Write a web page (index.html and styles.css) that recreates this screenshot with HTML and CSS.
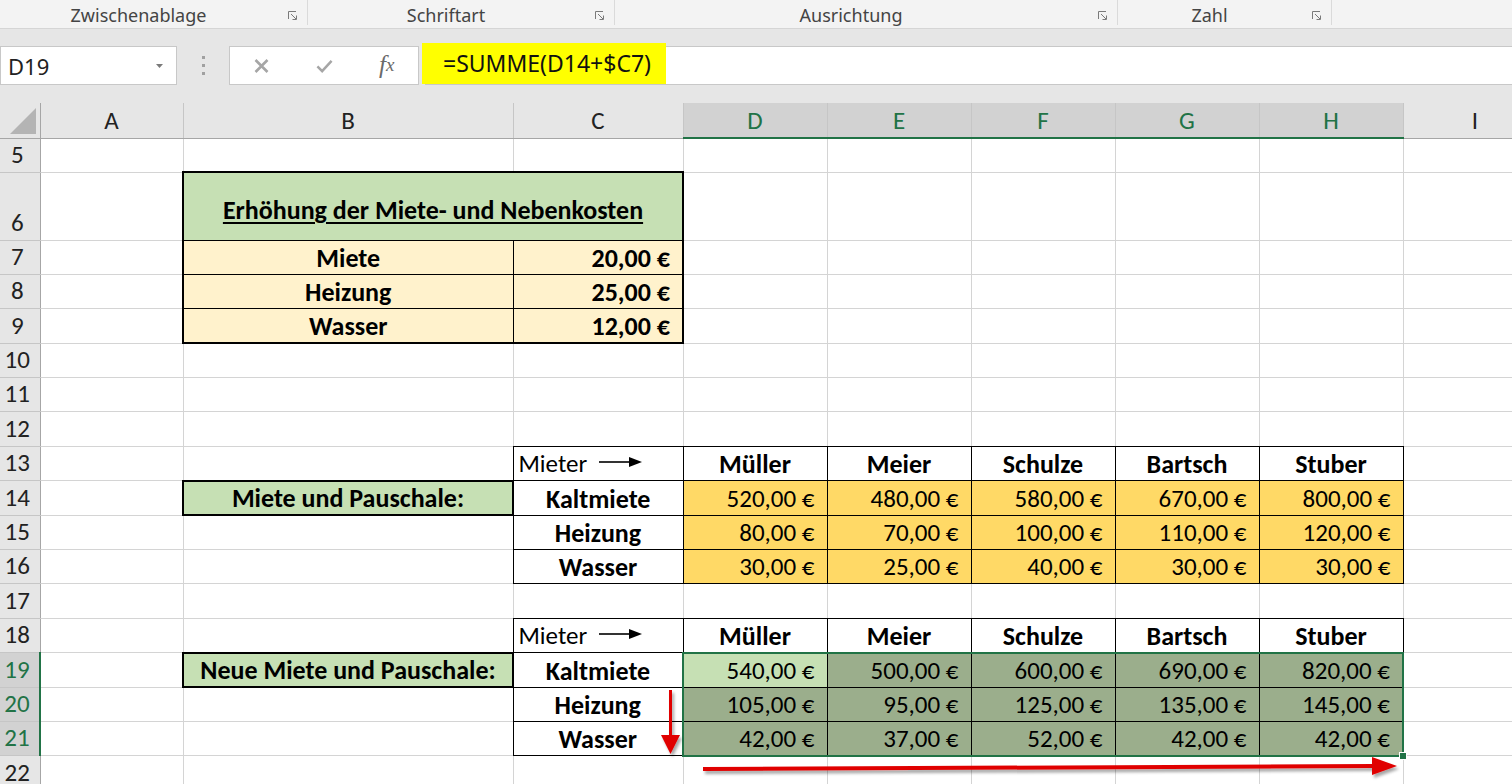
FILE: index.html
```html
<!DOCTYPE html>
<html lang="de">
<head>
    <meta charset="UTF-8">
    <meta name="viewport" content="width=device-width, initial-scale=1.0">
    <title>Mieterhöhung</title>
    <link rel="stylesheet" href="styles.css">
</head>
<body>
<!-- Ribbon group labels -->
<div class="ribbon">
    <div class="group g-clip"><span class="group-name">Zwischenablage</span>
        <svg class="launcher" viewBox="0 0 9 9"><path d="M0.5 8V0.5H8" /><path d="M3 3L8 8M4.5 8.5H8.5V4.5" /></svg></div>
    <div class="group g-font"><span class="group-name">Schriftart</span>
        <svg class="launcher" viewBox="0 0 9 9"><path d="M0.5 8V0.5H8" /><path d="M3 3L8 8M4.5 8.5H8.5V4.5" /></svg></div>
    <div class="group g-align"><span class="group-name">Ausrichtung</span>
        <svg class="launcher" viewBox="0 0 9 9"><path d="M0.5 8V0.5H8" /><path d="M3 3L8 8M4.5 8.5H8.5V4.5" /></svg></div>
    <div class="group g-num"><span class="group-name">Zahl</span>
        <svg class="launcher" viewBox="0 0 9 9"><path d="M0.5 8V0.5H8" /><path d="M3 3L8 8M4.5 8.5H8.5V4.5" /></svg></div>
</div>

<!-- Formula bar -->
<div class="formula-bar">
    <div class="name-box">
        <span>D19</span>
        <svg class="drop" viewBox="0 0 7 4"><path d="M0 0H7L3.5 4Z" /></svg>
    </div>
    <div class="grip"><i></i><i></i><i></i></div>
    <div class="fx-buttons">
        <span class="fx-btn"><svg viewBox="0 0 16 16"><path d="M2 2L14 14M14 2L2 14" /></svg></span>
        <span class="fx-btn"><svg viewBox="0 0 18 16"><path d="M1.5 8.5L6.5 13.5L16.5 2.5" /></svg></span>
        <span class="fx-btn fx">f<i>x</i></span>
    </div>
    <div class="formula"><span class="marker">=SUMME(D14+$C7)</span></div>
</div>

<!-- Worksheet -->
<div class="sheet">
    <table class="grid">
        <colgroup>
            <col class="c-rh"><col class="c-a"><col class="c-b"><col class="c-c">
            <col class="c-d"><col class="c-d"><col class="c-d"><col class="c-d"><col class="c-d">
            <col class="c-i">
        </colgroup>
        <tr class="r-head">
            <th class="corner"><svg viewBox="0 0 39 33"><path d="M10 30H36V4Z" /></svg></th>
            <th class="ch">A</th><th class="ch">B</th><th class="ch">C</th>
            <th class="ch on">D</th><th class="ch on">E</th><th class="ch on">F</th><th class="ch on">G</th><th class="ch on">H</th>
            <th class="ch">I</th>
        </tr>
        <tr class="r-34"><th class="rh">5</th><td></td><td></td><td></td><td></td><td></td><td></td><td></td><td></td><td></td></tr>
        <tr class="r-68">
            <th class="rh">6</th><td></td>
            <td colspan="2" class="k title kt2 kl2 kr2"><u>Erhöhung der Miete- und Nebenkosten</u></td>
            <td></td><td></td><td></td><td></td><td></td><td></td>
        </tr>
        <tr>
            <th class="rh">7</th><td></td>
            <td class="k name cream kl2">Miete</td><td class="k amt cream kr2">20,00 €</td>
            <td></td><td></td><td></td><td></td><td></td><td></td>
        </tr>
        <tr>
            <th class="rh">8</th><td></td>
            <td class="k name cream kl2">Heizung</td><td class="k amt cream kr2">25,00 €</td>
            <td></td><td></td><td></td><td></td><td></td><td></td>
        </tr>
        <tr>
            <th class="rh">9</th><td></td>
            <td class="k name cream kl2 kb2">Wasser</td><td class="k amt cream kr2 kb2">12,00 €</td>
            <td></td><td></td><td></td><td></td><td></td><td></td>
        </tr>
        <tr><th class="rh">10</th><td></td><td></td><td></td><td></td><td></td><td></td><td></td><td></td><td></td></tr>
        <tr><th class="rh">11</th><td></td><td></td><td></td><td></td><td></td><td></td><td></td><td></td><td></td></tr>
        <tr><th class="rh">12</th><td></td><td></td><td></td><td></td><td></td><td></td><td></td><td></td><td></td></tr>
        <tr>
            <th class="rh">13</th><td></td><td></td>
            <td class="k mieter">Mieter <svg class="arrow" viewBox="0 0 44 12"><path d="M0 6H32" /><path class="tip" d="M30 1L43 6L30 11Z" /></svg></td>
            <td class="k head">Müller</td><td class="k head">Meier</td><td class="k head">Schulze</td><td class="k head">Bartsch</td><td class="k head">Stuber</td>
            <td></td>
        </tr>
        <tr>
            <th class="rh">14</th><td></td>
            <td class="label">Miete und Pauschale:</td>
            <td class="k name">Kaltmiete</td>
            <td class="k val orange">520,00 €</td><td class="k val orange">480,00 €</td><td class="k val orange">580,00 €</td><td class="k val orange">670,00 €</td><td class="k val orange">800,00 €</td>
            <td></td>
        </tr>
        <tr>
            <th class="rh">15</th><td></td><td></td>
            <td class="k name">Heizung</td>
            <td class="k val orange">80,00 €</td><td class="k val orange">70,00 €</td><td class="k val orange">100,00 €</td><td class="k val orange">110,00 €</td><td class="k val orange">120,00 €</td>
            <td></td>
        </tr>
        <tr>
            <th class="rh">16</th><td></td><td></td>
            <td class="k name">Wasser</td>
            <td class="k val orange">30,00 €</td><td class="k val orange">25,00 €</td><td class="k val orange">40,00 €</td><td class="k val orange">30,00 €</td><td class="k val orange">30,00 €</td>
            <td></td>
        </tr>
        <tr><th class="rh">17</th><td></td><td></td><td></td><td></td><td></td><td></td><td></td><td></td><td></td></tr>
        <tr>
            <th class="rh">18</th><td></td><td></td>
            <td class="k mieter">Mieter <svg class="arrow" viewBox="0 0 44 12"><path d="M0 6H32" /><path class="tip" d="M30 1L43 6L30 11Z" /></svg></td>
            <td class="k head">Müller</td><td class="k head">Meier</td><td class="k head">Schulze</td><td class="k head">Bartsch</td><td class="k head">Stuber</td>
            <td></td>
        </tr>
        <tr>
            <th class="rh on">19</th><td></td>
            <td class="label">Neue Miete und Pauschale:</td>
            <td class="k name">Kaltmiete</td>
            <td class="k val pick sel-t sel-l">540,00 €</td>
            <td class="k val dim sel-t">500,00 €</td><td class="k val dim sel-t">600,00 €</td><td class="k val dim sel-t">690,00 €</td>
            <td class="k val dim sel-t sel-r">820,00 €</td>
            <td></td>
        </tr>
        <tr>
            <th class="rh on">20</th><td></td><td></td>
            <td class="k name">Heizung</td>
            <td class="k val dim sel-l">105,00 €</td>
            <td class="k val dim">95,00 €</td><td class="k val dim">125,00 €</td><td class="k val dim">135,00 €</td>
            <td class="k val dim sel-r">145,00 €</td>
            <td></td>
        </tr>
        <tr>
            <th class="rh on">21</th><td></td><td></td>
            <td class="k name">Wasser</td>
            <td class="k val dim sel-l sel-b">42,00 €</td>
            <td class="k val dim sel-b">37,00 €</td><td class="k val dim sel-b">52,00 €</td><td class="k val dim sel-b">42,00 €</td>
            <td class="k val dim sel-r sel-b">42,00 €<span class="handle"></span></td>
            <td></td>
        </tr>
        <tr><th class="rh">22</th><td></td><td></td><td></td><td></td><td></td><td></td><td></td><td></td><td></td></tr>
    </table>

    <!-- red hand-drawn arrows -->
    <svg class="annot" viewBox="0 0 1512 681">
        <defs>
            <filter id="shadow" x="-10%" y="-50%" width="120%" height="200%">
                <feDropShadow dx="2" dy="3" stdDeviation="1.5" flood-color="#000" flood-opacity="0.35" />
            </filter>
        </defs>
        <g filter="url(#shadow)" fill="#e00000" stroke="#e00000">
            <path d="M670.5 587V634" stroke-width="3" />
            <path d="M661 632H680L670.5 651Z" stroke="none" />
            <path d="M703 666L1374 663" stroke-width="4" />
            <path d="M1372 654L1397 663L1372 672Z" stroke="none" />
        </g>
    </svg>
</div>
</body>
</html>
```

FILE: styles.css
```css
body {
    margin: 0;
    width: 1512px;
    height: 784px;
    overflow: hidden;
    background-color: #fff;
    font-family: "Noto Sans", "Open Sans", sans-serif;
}

/* Ribbon */
.ribbon {
    display: flex;
    height: 29px;
    background-color: #f3f3f3;
    border-bottom: 1px solid #d5d5d5;
    box-sizing: border-box;
}
.group {
    display: flex;
    align-items: center;
    height: 25px;
    border-right: 1px solid #dadada;
    box-sizing: border-box;
}
.g-clip { width: 308px; }
.g-font { width: 307px; }
.g-align { width: 503px; }
.g-num { width: 214px; }
.group-name {
    flex: 1;
    text-align: center;
    font-size: 18px;
    color: #444;
    padding-top: 4px;
}
.launcher {
    width: 9px;
    height: 9px;
    margin: 6px 10px 0 11px;
    fill: none;
    stroke: #7a7a7a;
    stroke-width: 1;
}

/* Formula bar */
.formula-bar {
    display: flex;
    height: 74px;
    padding-top: 17px;
    box-sizing: border-box;
    background-color: #e6e6e6;
}
.name-box,
.fx-buttons,
.formula {
    height: 39px;
    background-color: #fff;
    border: 1px solid #c8c8c8;
    box-sizing: border-box;
}
.name-box {
    width: 177px;
    display: flex;
    align-items: center;
    justify-content: space-between;
    padding: 0 13px 0 7px;
    font-size: 22px;
    color: #222;
}
.drop {
    width: 7px;
    height: 4px;
    fill: #7a7a7a;
}
.grip {
    width: 52px;
    display: flex;
    flex-direction: column;
    align-items: center;
    gap: 5px;
    padding-top: 10px;
    box-sizing: border-box;
}
.grip i {
    width: 3px;
    height: 3px;
    background-color: #a0a0a0;
}
.fx-buttons {
    width: 190px;
    display: flex;
}
.fx-btn {
    flex: 1;
    display: flex;
    align-items: center;
    justify-content: center;
}
.fx-btn svg {
    width: 17px;
    height: 16px;
    fill: none;
    stroke: #a6a6a6;
    stroke-width: 2.6;
}
.fx {
    font-family: "Liberation Serif", serif;
    font-style: italic;
    font-size: 25px;
    color: #6a6a6a;
    padding-bottom: 2px;
}
.fx i {
    font-size: 19px;
}
.formula {
    flex: 1;
    margin-left: 6px;
    border-right: none;
}
.marker {
    display: inline-block;
    height: 41px;
    margin: -4px 0 0 -4px;
    padding: 0 15px 0 21px;
    line-height: 41px;
    background-color: #ffff00;
    font-size: 23px;
    color: #111;
}

/* Worksheet grid */
.sheet {
    position: relative;
}
.grid {
    border-collapse: collapse;
    table-layout: fixed;
    width: 1547px;
    font-family: Carlito, Calibri, Lato, sans-serif;
    font-size: 25px;
    color: #000;
}
.grid col {
    border-right: 1px solid #d4d4d4;
}
.c-rh { width: 40px; }
.c-a { width: 143px; }
.c-b { width: 330px; }
.c-c { width: 170px; }
.c-d { width: 144px; }
.c-i { width: 144px; }
.grid tr {
    height: 34.4px;
    border-bottom: 1px solid #d4d4d4;
}
.grid .r-head,
.grid .r-34 {
    height: 34px;
}
.grid .r-68 {
    height: 68px;
}
.grid td {
    padding: 0 12px 3px;
    line-height: 26px;
    vertical-align: bottom;
    white-space: nowrap;
}

/* headers */
.grid th {
    font-weight: normal;
    color: #222;
    background-color: #e6e6e6;
}
.corner {
    padding: 0;
    border-right: 1px solid #a6a6a6;
    border-bottom: 1px solid #a6a6a6;
}
.corner svg {
    display: block;
    width: 39px;
    height: 33px;
    fill: #b4b4b4;
}
.ch {
    border-right: 1px solid #c6c6c6;
    border-bottom: 1px solid #a6a6a6;
    padding-top: 2px;
}
.ch.on {
    background-color: #d2d2d2;
    color: #217346;
    border-bottom: 2px solid #217346;
}
.rh {
    text-align: center;
    vertical-align: bottom;
    padding: 0 5px 4px 0;
    line-height: 26px;
    border-right: 1px solid #a6a6a6;
    border-bottom: 1px solid #c6c6c6;
}
.rh.on {
    background-color: #d2d2d2;
    color: #217346;
    border-right: 2px solid #217346;
}

/* cell borders */
.k { border: 1px solid #000; }
.kt2 { border-top: 2px solid #000; }
.kl2 { border-left: 2px solid #000; }
.kr2 { border-right: 2px solid #000; }
.kb2 { border-bottom: 2px solid #000; }

/* cell formats */
.grid .title {
    background-color: #c6e0b4;
    text-align: center;
    vertical-align: middle;
    font-weight: bold;
    font-size: 26px;
    padding: 8px 0 0;
}
.title u {
    text-underline-offset: 3px;
    text-decoration-thickness: 2px;
}
.cream { background-color: #fff2cc; }
.name,
.amt,
.head,
.label {
    font-weight: bold;
    font-size: 26px;
}
.name,
.head,
.label {
    text-align: center;
}
.amt {
    text-align: right;
}
.grid .mieter {
    padding-left: 5px;
}
.arrow {
    width: 44px;
    height: 12px;
    margin-left: 6px;
    vertical-align: 4px;
    fill: none;
    stroke: #000;
    stroke-width: 1.6;
}
.arrow .tip {
    fill: #000;
    stroke: none;
}
.label {
    border: 2px solid #000;
    background-color: #c6e0b4;
}
.val {
    text-align: right;
}
.orange { background-color: #ffd966; }
.pick { background-color: #c6e0b4; }
.dim { background-color: #9bae8c; }

/* selection range D19:H21 */
.sel-t { border-top: 2px solid #217346; }
.sel-l { border-left: 2px solid #217346; }
.sel-r { border-right: 2px solid #217346; }
.sel-b { border-bottom: 2px solid #217346; position: relative; }
.handle {
    position: absolute;
    right: -5px;
    bottom: -5px;
    width: 6px;
    height: 6px;
    background-color: #217346;
    border: 1px solid #fff;
}

.annot {
    position: absolute;
    left: 0;
    top: 0;
    width: 1512px;
    height: 681px;
    pointer-events: none;
}
```
